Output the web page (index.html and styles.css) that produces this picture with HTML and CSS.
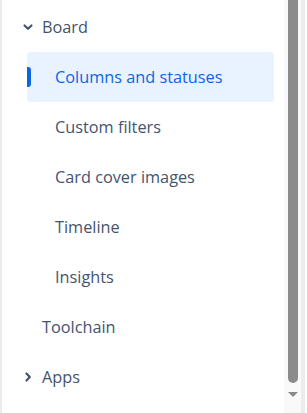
FILE: index.html
```html
<!DOCTYPE html>
<html lang="en">
<head>
  <meta charset="UTF-8">
  <meta name="viewport" content="width=device-width, initial-scale=1.0">
  <title>Board settings</title>
  <link rel="stylesheet" href="styles.css">
</head>
<body>
  <div class="sidebar">
    <div class="nav">
      <div class="nav-item">
        <span class="chevron">
          <svg width="16" height="16" viewBox="0 0 16 16"><path d="M4.5 6.5 8 9.8l3.5-3.3" fill="none" stroke="currentColor" stroke-width="2.2" stroke-linecap="round" stroke-linejoin="round"/></svg>
        </span>
        <span>Board</span>
      </div>
      <div class="sub-item selected">Columns and statuses</div>
      <div class="sub-item">Custom filters</div>
      <div class="sub-item">Card cover images</div>
      <div class="sub-item">Timeline</div>
      <div class="sub-item">Insights</div>
      <div class="nav-item">
        <span class="chevron"></span>
        <span>Toolchain</span>
      </div>
      <div class="nav-item">
        <span class="chevron">
          <svg width="16" height="16" viewBox="0 0 16 16"><path d="M6.5 4.5 9.8 8l-3.3 3.5" fill="none" stroke="currentColor" stroke-width="2.2" stroke-linecap="round" stroke-linejoin="round"/></svg>
        </span>
        <span>Apps</span>
      </div>
    </div>
    <div class="scrollbar">
      <div class="thumb"></div>
      <div class="arrow"></div>
    </div>
    <div class="edge"></div>
  </div>
</body>
</html>
```

FILE: styles.css
```css
/* Settings sidebar */
body {
  margin: 0;
  padding: 0;
  background-color: #fff;
  font-family: "Open Sans", "Noto Sans", sans-serif;
  font-size: 16.3px;
  color: #44546f;
}
.sidebar {
  display: flex;
  height: 413px;
  border-left: 2px solid #ebecf0;
  box-sizing: border-box;
}
.nav {
  flex: 1;
  padding-top: 2px;
}
.nav-item {
  display: flex;
  align-items: center;
  height: 50px;
  padding-left: 18px;
}
.chevron {
  display: flex;
  width: 16px;
  height: 16px;
  margin-right: 6px;
}
.sub-item {
  position: relative;
  display: flex;
  align-items: center;
  height: 50px;
  margin: 0 10px 0 25px;
  padding-left: 28px;
  border-radius: 4px;
}
.sub-item.selected {
  background-color: #e9f2ff;
  color: #0c66e4;
}
.sub-item.selected::before {
  content: "";
  position: absolute;
  left: 0;
  top: 15px;
  width: 4px;
  height: 20px;
  background-color: #0c66e4;
  border-radius: 0 3px 3px 0;
}
.scrollbar {
  display: flex;
  flex-direction: column;
  align-items: center;
  width: 17px;
  background-color: #f9f9f9;
}
.thumb {
  width: 10px;
  height: 383px;
  margin-left: 1px;
  background-color: #8b8b8b;
  border-radius: 0 0 5px 5px;
}
.arrow {
  margin-top: 9px;
  margin-left: 1px;
  width: 0;
  height: 0;
  border-left: 5px solid transparent;
  border-right: 5px solid transparent;
  border-top: 5px solid #8b8b8b;
}
.edge {
  width: 4px;
  margin-right: 2px;
  background-color: #ebecf0;
}
```
